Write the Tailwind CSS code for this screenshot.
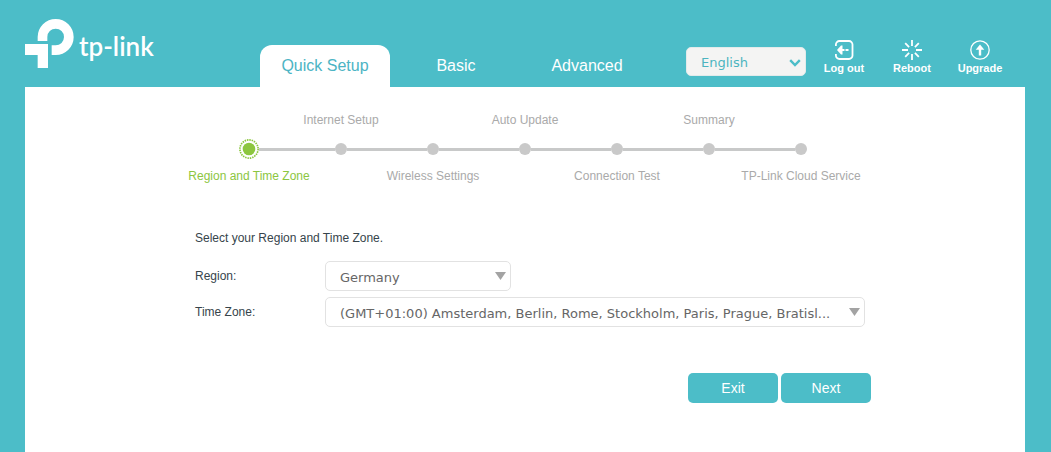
<!DOCTYPE html>
<html lang="en">
<head>
<meta charset="utf-8">
<meta name="viewport" content="width=device-width, initial-scale=1">
<title>Quick Setup</title>
<script src="https://cdn.jsdelivr.net/npm/@tailwindcss/browser@4"></script>
</head>
<body class="flex min-h-screen flex-col bg-[#4cbdc8] pr-[26px] pl-[25px] font-['Liberation_Sans',Arial,sans-serif] text-xs text-[#36444b]">
  <header class="flex min-h-[87px] items-end">
    <a href="#" aria-label="tp-link home" class="flex w-[235px] shrink-0 items-center gap-1 self-start pt-[19px] text-white">
      <svg class="h-[49px] w-[50px] shrink-0" viewBox="0 0 150 147" fill="currentColor" aria-hidden="true">
        <path d="M38 66V54a54 54 0 1 1 54 54H80V79h12a25 25 0 1 0-25-25v12z"/>
        <path d="M0 75h69v72H38v-39H0z"/>
      </svg>
      <span class="pt-1 font-['Lato',sans-serif] text-[26px] leading-8 font-semibold">tp-link</span>
    </a>
    <nav class="flex gap-px text-base text-white">
      <a href="#" aria-current="page" class="flex h-[42px] w-[130px] items-center justify-center rounded-t-xl bg-white text-[#4cb4c4]">Quick Setup</a>
      <a href="#" class="flex h-[42px] w-[130px] items-center justify-center">Basic</a>
      <a href="#" class="flex h-[42px] w-[130px] items-center justify-center">Advanced</a>
    </nav>
    <div class="relative mb-[11px] ml-auto w-[120px]">
      <select aria-label="Language" class="h-[29px] w-full appearance-none rounded-[5px] border border-[#e2ebeb] bg-[#f4f4f3] pt-0.5 pl-3.5 font-['DejaVu_Sans',Verdana,sans-serif] text-[13px] text-[#4cb4c0]">
        <option>English</option>
      </select>
      <svg class="pointer-events-none absolute top-3 right-[5px] h-2 w-3" viewBox="0 0 12 8" fill="none" stroke="#4cbdc8" stroke-width="2.4" aria-hidden="true"><path d="M1.200 1.200 6 6l4.800-4.800"/></svg>
    </div>
    <div class="mr-[11px] mb-3 ml-1 flex text-[11px] leading-[14px] font-bold text-white">
      <button type="button" class="flex w-[68px] flex-col items-center gap-px">
        <svg class="size-5" viewBox="0 0 20 20" fill="none" stroke="currentColor" stroke-width="1.800" aria-hidden="true">
          <path d="M1.900 6V4.500A3.500 3.500 0 0 1 5.400 1H15a3.500 3.500 0 0 1 3.500 3.500v11A3.500 3.500 0 0 1 15 19H5.400a3.500 3.500 0 0 1-3.500-3.500V14"/>
          <path d="M7 10h3.500M11.500 10h3"/>
          <path d="M3 10l4-4.500h1.500v9H7z" fill="currentColor" stroke="none"/>
        </svg>
        Log out
      </button>
      <button type="button" class="flex w-[68px] flex-col items-center gap-px">
        <svg class="size-5" viewBox="0 0 20 20" fill="none" stroke="currentColor" stroke-width="1.800" aria-hidden="true">
          <path d="M10 0v6M10 14v6M0 10h6M14 10h6M3.200 3.200l3.900 3.900M12.900 12.900l3.900 3.900M16.800 3.200l-3.900 3.900M7.100 12.900l-3.900 3.900"/>
        </svg>
        Reboot
      </button>
      <button type="button" class="flex w-[68px] flex-col items-center gap-px">
        <svg class="size-5" viewBox="0 0 20 20" fill="none" stroke="currentColor" aria-hidden="true">
          <circle cx="10" cy="10" r="9.200" stroke-width="1.300"/>
          <path d="M10 8v7.500" stroke-width="2.400"/>
          <path d="M10 4.500l4.300 5.200H5.700z" fill="currentColor" stroke="none"/>
        </svg>
        Upgrade
      </button>
    </div>
  </header>

  <main class="flex-1 bg-white pb-12">
    <ol class="mx-auto grid max-w-[644px] grid-cols-7 pt-[25px] leading-4 whitespace-nowrap text-[#aaaaaa]">
      <li class="flex flex-col items-center text-[#8cc63f]" aria-current="step">
        <span class="mt-[27px] flex w-full items-center">
          <span class="flex-1"></span>
          <svg class="size-5" viewBox="0 0 20 20" fill="none" aria-hidden="true">
            <circle cx="10" cy="10" r="6.300" fill="currentColor"/>
            <circle cx="10" cy="10" r="9.100" stroke="currentColor" stroke-width="1.700" stroke-dasharray="1.500 .883"/>
          </svg>
          <span class="h-[3px] flex-1 bg-[#c8c9c9]"></span>
        </span>
        <span class="mt-[9px]">Region and Time Zone</span>
      </li>
      <li class="flex flex-col items-center">
        <span>Internet Setup</span>
        <span class="mt-[11px] flex h-5 w-full items-center"><span class="h-[3px] flex-1 bg-[#c8c9c9]"></span><span class="size-3 rounded-full bg-[#c9c9c9]"></span><span class="h-[3px] flex-1 bg-[#c8c9c9]"></span></span>
      </li>
      <li class="flex flex-col items-center">
        <span class="mt-[27px] flex h-5 w-full items-center"><span class="h-[3px] flex-1 bg-[#c8c9c9]"></span><span class="size-3 rounded-full bg-[#c9c9c9]"></span><span class="h-[3px] flex-1 bg-[#c8c9c9]"></span></span>
        <span class="mt-[9px]">Wireless Settings</span>
      </li>
      <li class="flex flex-col items-center">
        <span>Auto Update</span>
        <span class="mt-[11px] flex h-5 w-full items-center"><span class="h-[3px] flex-1 bg-[#c8c9c9]"></span><span class="size-3 rounded-full bg-[#c9c9c9]"></span><span class="h-[3px] flex-1 bg-[#c8c9c9]"></span></span>
      </li>
      <li class="flex flex-col items-center">
        <span class="mt-[27px] flex h-5 w-full items-center"><span class="h-[3px] flex-1 bg-[#c8c9c9]"></span><span class="size-3 rounded-full bg-[#c9c9c9]"></span><span class="h-[3px] flex-1 bg-[#c8c9c9]"></span></span>
        <span class="mt-[9px]">Connection Test</span>
      </li>
      <li class="flex flex-col items-center">
        <span>Summary</span>
        <span class="mt-[11px] flex h-5 w-full items-center"><span class="h-[3px] flex-1 bg-[#c8c9c9]"></span><span class="size-3 rounded-full bg-[#c9c9c9]"></span><span class="h-[3px] flex-1 bg-[#c8c9c9]"></span></span>
      </li>
      <li class="flex flex-col items-center">
        <span class="mt-[27px] flex h-5 w-full items-center"><span class="h-[3px] flex-1 bg-[#c8c9c9]"></span><span class="size-3 rounded-full bg-[#c9c9c9]"></span><span class="flex-1"></span></span>
        <span class="mt-[9px]">TP-Link Cloud Service</span>
      </li>
    </ol>

    <form class="mt-[46px] ml-[170px] max-w-[676px]">
      <p class="leading-4">Select your Region and Time Zone.</p>
      <div class="mt-[15px] flex items-center">
        <label for="region" class="w-[130px] shrink-0">Region:</label>
        <div class="relative w-[186px]">
          <select id="region" class="block h-[30px] w-full appearance-none rounded-[5px] border border-[#e2e2e2] bg-white pt-1 pl-3.5 font-['DejaVu_Sans',Verdana,sans-serif] text-[13px] text-[#666666]">
            <option>Germany</option>
          </select>
          <svg class="pointer-events-none absolute top-[11px] right-[5px] h-2 w-[11px]" viewBox="0 0 11 8" fill="#a3a3a3" aria-hidden="true"><path d="M0 0h11L5.500 8z"/></svg>
        </div>
      </div>
      <div class="mt-1.5 flex items-center">
        <label for="timezone" class="w-[130px] shrink-0">Time Zone:</label>
        <div class="relative w-[540px]">
          <select id="timezone" class="block h-[30px] w-full appearance-none rounded-[5px] border border-[#e2e2e2] bg-white pt-1 pl-3.5 font-['DejaVu_Sans',Verdana,sans-serif] text-[13px] text-[#666666]">
            <option>(GMT+01:00) Amsterdam, Berlin, Rome, Stockholm, Paris, Prague, Bratisl...</option>
          </select>
          <svg class="pointer-events-none absolute top-[11px] right-[5px] h-2 w-[11px]" viewBox="0 0 11 8" fill="#a3a3a3" aria-hidden="true"><path d="M0 0h11L5.500 8z"/></svg>
        </div>
      </div>
      <div class="mt-[46px] flex justify-end gap-[3px] text-sm text-white">
        <button type="button" class="h-[30px] w-[90px] rounded-[5px] bg-[#4cbdc8]">Exit</button>
        <button type="submit" class="h-[30px] w-[90px] rounded-[5px] bg-[#4cbdc8]">Next</button>
      </div>
    </form>
  </main>
</body>
</html>
